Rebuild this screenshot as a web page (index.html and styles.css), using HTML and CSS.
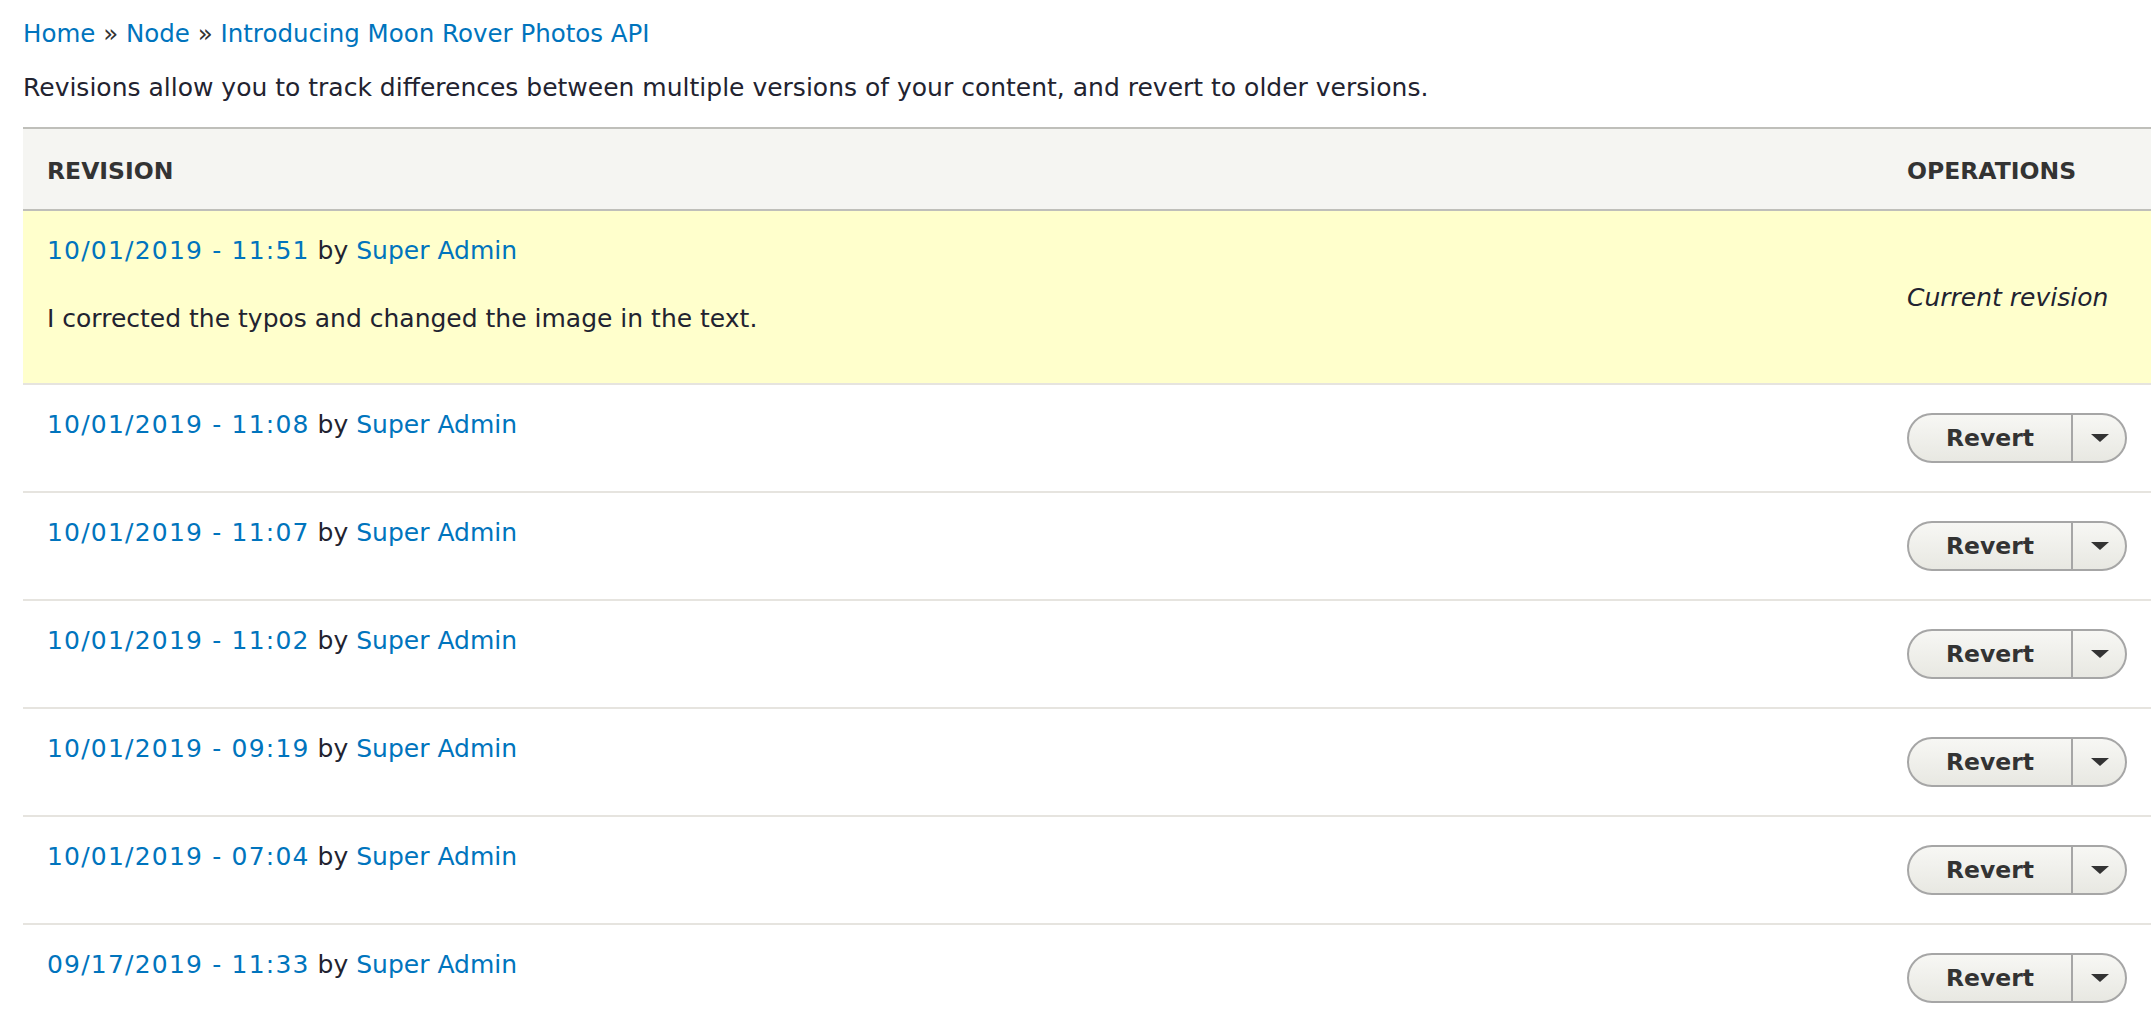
FILE: index.html
```html
<!DOCTYPE html>
<html>
<head>
<meta charset="utf-8">
<title>Revisions</title>
<link rel="stylesheet" href="styles.css">
</head>
<body>
<div class="page">
  <nav class="breadcrumb">
    <a href="#">Home</a> <span class="sep">»</span> <a href="#">Node</a> <span class="sep">»</span> <a href="#">Introducing Moon Rover Photos API</a>
  </nav>
  <p class="help">Revisions allow you to track differences between multiple versions of your content, and revert to older versions.</p>
  <table class="revisions">
    <thead>
      <tr>
        <th class="col-rev">Revision</th>
        <th class="col-ops">Operations</th>
      </tr>
    </thead>
    <tbody>
      <tr class="current">
        <td class="rev"><a class="date" href="#">10/01/2019 - 11:51</a> by <a href="#">Super Admin</a>
          <p class="log">I corrected the typos and changed the image in the text.</p>
        </td>
        <td class="ops"><em class="current-label">Current revision</em></td>
      </tr>
      <tr>
        <td class="rev"><a class="date" href="#">10/01/2019 - 11:08</a> by <a href="#">Super Admin</a></td>
        <td class="ops"><div class="dropbutton"><button class="db-main">Revert</button><button class="db-toggle"><span class="caret"></span></button></div></td>
      </tr>
      <tr>
        <td class="rev"><a class="date" href="#">10/01/2019 - 11:07</a> by <a href="#">Super Admin</a></td>
        <td class="ops"><div class="dropbutton"><button class="db-main">Revert</button><button class="db-toggle"><span class="caret"></span></button></div></td>
      </tr>
      <tr>
        <td class="rev"><a class="date" href="#">10/01/2019 - 11:02</a> by <a href="#">Super Admin</a></td>
        <td class="ops"><div class="dropbutton"><button class="db-main">Revert</button><button class="db-toggle"><span class="caret"></span></button></div></td>
      </tr>
      <tr>
        <td class="rev"><a class="date" href="#">10/01/2019 - 09:19</a> by <a href="#">Super Admin</a></td>
        <td class="ops"><div class="dropbutton"><button class="db-main">Revert</button><button class="db-toggle"><span class="caret"></span></button></div></td>
      </tr>
      <tr>
        <td class="rev"><a class="date" href="#">10/01/2019 - 07:04</a> by <a href="#">Super Admin</a></td>
        <td class="ops"><div class="dropbutton"><button class="db-main">Revert</button><button class="db-toggle"><span class="caret"></span></button></div></td>
      </tr>
      <tr>
        <td class="rev"><a class="date" href="#">09/17/2019 - 11:33</a> by <a href="#">Super Admin</a></td>
        <td class="ops"><div class="dropbutton"><button class="db-main">Revert</button><button class="db-toggle"><span class="caret"></span></button></div></td>
      </tr>
    </tbody>
  </table>
</div>
</body>
</html>
```
FILE: styles.css
```css
html, body {
  margin: 0;
  background: #ffffff;
}
body {
  font-family: "DejaVu Sans", sans-serif;
  font-size: 25px;
  line-height: 38px;
  color: #222330;
  overflow: hidden;
}
a {
  color: #0074bd;
  text-decoration: none;
}
.page {
  padding: 15px 2px 0 23px;
}
.breadcrumb {
  font-size: 24.5px;
  line-height: 38px;
  color: #333333;
}
.breadcrumb .sep {
  color: #333333;
}
.help {
  margin: 16px 0 20px;
  color: #222330;
}
.revisions {
  width: 100%;
  border-collapse: separate;
  border-spacing: 0;
}
.revisions th {
  background: #f5f5f2;
  border-top: 2px solid #bfbfba;
  border-bottom: 2px solid #bfbfba;
  padding: 23px 24px 19px;
  height: 38px;
  box-sizing: content-box;
  text-align: left;
  text-transform: uppercase;
  font-weight: bold;
  font-size: 23.5px;
  line-height: 38px;
  color: #333333;
  vertical-align: middle;
}
.revisions th.col-ops {
  width: 1%;
  white-space: nowrap;
}
.revisions td {
  border-bottom: 2px solid #e6e4df;
}
.revisions td.rev {
  padding: 21px 24px 20px;
  vertical-align: top;
}
.date {
  letter-spacing: 1.2px;
}
.revisions td.ops {
  padding: 20px 24px;
  vertical-align: middle;
  white-space: nowrap;
}
.revisions tr.current td {
  background: #ffffcc;
}
.revisions tr.current td.ops {
  padding-top: 22px;
}
.log {
  margin: 30px 0 25px;
}
.current-label {
  font-style: italic;
  color: #222330;
}
.dropbutton {
  display: flex;
  width: 220px;
  height: 50px;
  margin: 8px 0;
  box-sizing: border-box;
  border: 2px solid #a6a6a6;
  border-radius: 25px;
  overflow: hidden;
  background: linear-gradient(to bottom, #f7f7f4 0%, #e8e8e2 100%);
}
.dropbutton button {
  border: 0;
  background: transparent;
  margin: 0;
  padding: 0;
  font-family: inherit;
  color: #333333;
  cursor: pointer;
}
.db-main {
  flex: 1;
  font-size: 23.5px;
  font-weight: bold;
  line-height: 46px;
  text-align: center;
  border-right: 2px solid #a6a6a6 !important;
}
.db-toggle {
  width: 52px;
  display: flex;
  align-items: center;
  justify-content: center;
}
.caret {
  display: block;
  width: 0;
  height: 0;
  border-left: 9px solid transparent;
  border-right: 9px solid transparent;
  border-top: 8px solid #333333;
  margin-left: 2px;
}
```
